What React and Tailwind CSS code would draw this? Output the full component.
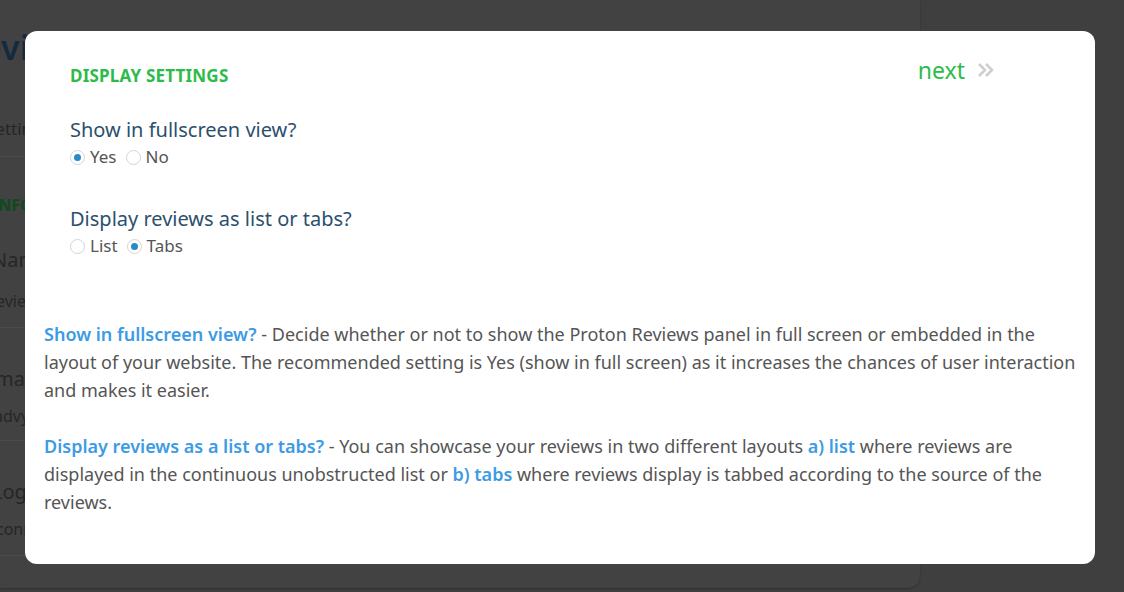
import React from 'react';

const font = { fontFamily: '"Noto Sans", "Open Sans", sans-serif' };

const Radio = ({ checked, label }) => (
  <label className="flex items-center gap-[5px] mr-[9px]">
    <span className="w-[15px] h-[15px] rounded-full border border-[#d4d4d4] bg-white flex items-center justify-center">
      {checked && <span className="w-[7px] h-[7px] rounded-full bg-[#2a8ac8]" />}
    </span>
    <span>{label}</span>
  </label>
);

const Question = ({ title, options }) => (
  <div>
    <div className="text-[20px] leading-[26px] text-[#2c4f6e]">{title}</div>
    <div className="flex text-[17px] leading-[24px] text-[#555] mt-[2px]">
      {options.map((o) => (
        <Radio key={o.label} checked={o.checked} label={o.label} />
      ))}
    </div>
  </div>
);

const BackgroundPage = () => (
  <div className="w-[920px] h-[588px] bg-[#424242] rounded-br-[12px] shadow-[0_1px_2px_rgba(0,0,0,0.25)] text-[#262626] overflow-hidden">
    <div className="text-[34px] font-semibold text-[#142a40] ml-[-40px] pt-[24px] leading-[46px]">Reviews</div>
    <div className="text-[17px] ml-[-14px] mt-[46px]">Settings</div>
    <div className="border-b border-[#4a4a4a] mt-[14px]" />
    <div className="text-[16px] font-bold text-[#0e4a1c] ml-[-8px] mt-[36px]">INFO</div>
    <div className="text-[20px] ml-[-8px] mt-[28px]">Name</div>
    <div className="text-[16px] ml-[-14px] mt-[14px]">Reviews</div>
    <div className="border-b border-[#4a4a4a] mt-[14px]" />
    <div className="text-[20px] ml-[-16px] mt-[36px]">Email</div>
    <div className="text-[16px] ml-[-6px] mt-[10px]">advy</div>
    <div className="border-b border-[#4a4a4a] mt-[12px]" />
    <div className="text-[20px] ml-[-8px] mt-[36px]">Logo</div>
    <div className="text-[16px] ml-[-4px] mt-[10px]">connect</div>
    <div className="border-b border-[#4a4a4a] mt-[14px]" />
  </div>
);

export default function App() {
  return (
    <div className="relative w-[1124px] h-[592px] overflow-hidden bg-[#3f3f3f]" style={font}>
      <BackgroundPage />
      <div className="absolute left-[25px] top-[31px] w-[1070px] h-[533px] bg-white rounded-[12px] px-[19px]">
        <div className="flex justify-between pl-[26px] pr-[81px]">
          <div>
            <div className="text-[17px] font-bold text-[#2dbb4a] mt-[34px] leading-[22px] tracking-[0.2px]">DISPLAY SETTINGS</div>
            <div className="mt-[30px]">
              <Question title="Show in fullscreen view?" options={[{ label: 'Yes', checked: true }, { label: 'No' }]} />
            </div>
            <div className="mt-[37px]">
              <Question title="Display reviews as list or tabs?" options={[{ label: 'List' }, { label: 'Tabs', checked: true }]} />
            </div>
          </div>
          <div className="flex items-center gap-[12px] mt-[23px] h-[32px] text-[23px] text-[#2dbb4a]">
            <span>next</span>
            <svg width="18" height="16" viewBox="0 0 18 16" fill="none" stroke="#cfcfcf" strokeWidth="2.6">
              <path d="M2 2l6 6-6 6" />
              <path d="M9 2l6 6-6 6" />
            </svg>
          </div>
        </div>
        <div className="mt-[62px] text-[18px] leading-[28px] text-[#555]">
          <p>
            <span className="font-semibold text-[#3d9be3]">Show in fullscreen view?</span> - Decide whether or not to show the Proton Reviews panel in full screen or embedded in the layout of your website. The recommended setting is Yes (show in full screen) as it increases the chances of user interaction and makes it easier.
          </p>
          <p className="mt-[28px]">
            <span className="font-semibold text-[#3d9be3]">Display reviews as a list or tabs?</span> - You can showcase your reviews in two different layouts <span className="font-semibold text-[#3d9be3]">a) list</span> where reviews are displayed in the continuous unobstructed list or <span className="font-semibold text-[#3d9be3]">b) tabs</span> where reviews display is tabbed according to the source of the reviews.
          </p>
        </div>
      </div>
    </div>
  );
}
